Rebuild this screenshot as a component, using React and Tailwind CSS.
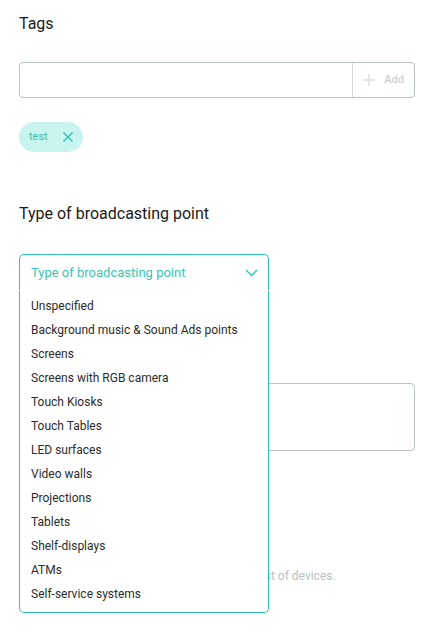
import { useState } from 'react'

const types = [
  'Unspecified',
  'Background music & Sound Ads points',
  'Screens',
  'Screens with RGB camera',
  'Touch Kiosks',
  'Touch Tables',
  'LED surfaces',
  'Video walls',
  'Projections',
  'Tablets',
  'Shelf-displays',
  'ATMs',
  'Self-service systems',
]

const Chevron = () => (
  <svg width="13" height="8" viewBox="0 0 13 8" fill="none" stroke="#2ec4b4" strokeWidth="1.3">
    <polyline points="1,1 6.5,6.5 12,1" />
  </svg>
)

const Plus = () => (
  <svg width="12" height="12" viewBox="0 0 12 12" stroke="#d3d8d8" strokeWidth="1.2">
    <line x1="6" y1="0" x2="6" y2="12" />
    <line x1="0" y1="6" x2="12" y2="6" />
  </svg>
)

const Cross = () => (
  <svg width="10" height="10" viewBox="0 0 10 10" stroke="#2bbfae" strokeWidth="1.3">
    <line x1="0.5" y1="0.5" x2="9.5" y2="9.5" />
    <line x1="9.5" y1="0.5" x2="0.5" y2="9.5" />
  </svg>
)

export default function App() {
  const [tags] = useState(['test'])

  return (
    <div className="bg-white min-h-[628px] pl-[19px] pt-[12px] font-['Roboto',sans-serif]">
      <div className="w-[396px]">
        {/* Tags */}
        <h3 className="text-[16px] leading-[24px] text-[#1a1a1a]">Tags</h3>
        <div className="mt-[26px] flex h-[36px] border border-[#b9c4c3] rounded-[4px]">
          <input className="flex-1 px-3 outline-none text-[13px] bg-transparent" />
          <button className="flex items-center gap-[9px] pl-[10px] pr-[10px] border-l border-[#d3dada] text-[11px] font-medium text-[#cdd2d2]">
            <Plus />
            Add
          </button>
        </div>
        <div className="mt-[24px] flex gap-2">
          {tags.map((t) => (
            <span key={t} className="inline-flex items-center h-[30px] pl-[10px] pr-[10px] gap-[15px] rounded-full bg-[#c9f3ee] text-[11px] text-[#3bbdad]">
              {t}
              <Cross />
            </span>
          ))}
        </div>

        {/* Type of broadcasting point */}
        <h3 className="mt-[50px] text-[16px] leading-[24px] text-[#1a1a1a]">Type of broadcasting point</h3>
        <div className="relative mt-[28px] w-[250px]">
          <div className="flex items-center justify-between h-[36px] pl-[11px] pr-[10px] border border-[#2ec4b4] rounded-t-[5px] border-b-0">
            <span className="text-[13px] text-[#3cc3b3]">Type of broadcasting point</span>
            <Chevron />
          </div>
          <ul className="absolute left-0 top-[37px] w-full z-10 bg-white border border-[#2ec4b4] border-t-0 rounded-b-[5px] pt-[3px] pb-[6px]">
            {types.map((t) => (
              <li key={t} className="h-[24px] flex items-center pl-[11px] text-[12px] text-[#2b2b2b]">
                {t}
              </li>
            ))}
          </ul>
        </div>

        {/* Content under the open dropdown */}
        <textarea className="block mt-[93px] w-full h-[68px] border border-[#b9c4c3] rounded-[4px] resize-none outline-none" />
        <p className="mt-[116px] text-[12px] text-[#b8c0c4]">Choose the type that best describes your full list of devices.</p>
      </div>
    </div>
  )
}
